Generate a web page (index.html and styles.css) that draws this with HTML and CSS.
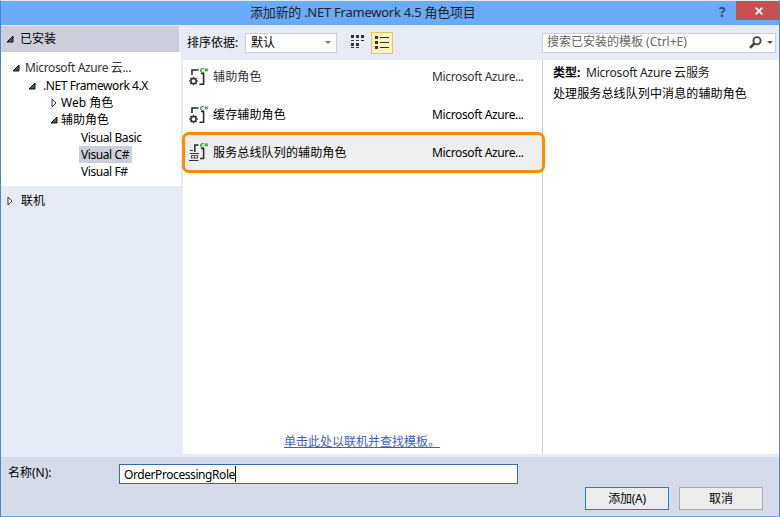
FILE: index.html
```html
<!DOCTYPE html>
<html lang="zh-CN">
<head>
<meta charset="utf-8">
<title>添加新的 .NET Framework 4.5 角色项目</title>
<link rel="stylesheet" href="styles.css">
</head>
<body>
<svg width="0" height="0" class="defs">
  <defs>
    <g id="bracket" fill="none" stroke="#2b2b2b" stroke-width="1.6">
      <path d="M3 7V2H9.5M12 5.5H14.6V16.2H10.5"/>
    </g>
    <g id="csharp" fill="none" stroke="#2e9a36">
      <path stroke-width="1.3" d="M14.8 .9C12.800 .2 11.700 1.300 11.700 2.500C11.700 3.800 12.900 4.800 14.800 4.100"/>
      <path stroke-width=".8" d="M16.500 .3V3.500M18 .3V3.500M15.600 1.200H18.900M15.600 2.600H18.900"/>
    </g>
    <symbol id="role" viewBox="0 0 20 19">
      <use href="#bracket"/><use href="#csharp"/>
      <circle cx="4.500" cy="13" r="2.600" fill="none" stroke="#333" stroke-width="1.500"/>
      <path d="M4.500 8.700V10.300M4.500 15.700V17.300M.2 13H1.800M7.200 13H8.800M1.500 10L2.600 11.100M6.400 14.900L7.500 16M1.500 16L2.600 14.900M6.400 11.100L7.500 10" stroke="#333" stroke-width="1.500"/>
    </symbol>
    <symbol id="bus" viewBox="0 0 20 19">
      <path d="M5.800 9V2H9.500M12 5.500H14.600V15.500H11" fill="none" stroke="#2b2b2b" stroke-width="1.500"/>
      <use href="#csharp"/>
      <path d="M1 7.500H4M1 10.500H10M0 17.500H9.500" stroke="#333" stroke-width="1.100"/>
      <path d="M2 12.500H9M2 15H9M2.500 12V15.500M5.500 12V15.500M8.500 12V15.500" stroke="#555" stroke-width="1"/>
    </symbol>
    <symbol id="open" viewBox="0 0 8 8"><path d="M7 1V7H1Z" fill="#555" stroke="#111"/></symbol>
    <symbol id="closed" viewBox="0 0 6 10"><path d="M1 1L5 5L1 9Z" fill="#fff" stroke="#333"/></symbol>
  </defs>
</svg>
<div class="window">
  <header class="titlebar">
    <h1><span class="t-title">添加新的 .NET Framework 4.5 角色项目</span></h1>
    <span class="help">?</span>
    <button class="close"><svg width="8" height="8" viewBox="0 0 8 8"><path d="M.7 .7L7.300 7.300M7.300 .7L.7 7.300" stroke="#fff" stroke-width="1.700"/></svg></button>
  </header>
  <div class="body">
    <aside class="sidebar">
      <div class="group"><svg class="open"><use href="#open"/></svg><span>已安装</span></div>
      <div class="tree">
        <div class="node n1"><svg class="open"><use href="#open"/></svg><span class="t-azure">Microsoft Azure 云...</span></div>
        <div class="node n2"><svg class="open"><use href="#open"/></svg><span class="t-net">.NET Framework 4.X</span></div>
        <div class="node n3"><svg class="closed"><use href="#closed"/></svg><span class="t-web">Web 角色</span></div>
        <div class="node n3"><svg class="open"><use href="#open"/></svg><span>辅助角色</span></div>
        <div class="node n4 first"><span class="t-vb">Visual Basic</span></div>
        <div class="node n4"><span class="selected">Visual C#</span></div>
        <div class="node n4"><span>Visual F#</span></div>
      </div>
      <div class="online"><svg class="closed"><use href="#closed"/></svg><span>联机</span></div>
    </aside>
    <div class="content">
      <div class="toolbar">
        <span class="sort-label">排序依据:</span>
        <div class="combo"><span>默认</span><svg width="6" height="4"><path d="M0 0H6L3 3Z" fill="#777"/></svg></div>
        <svg class="small-view" width="14" height="15" fill="#333"><path d="M1 0h3v3H1zM6 0h3v3H6zM11 0h3v3h-3zM1 5h3v1H1zM6 5h3v1H6zM11 5h3v1h-3zM1 8h3v3H1zM6 8h3v3H6zM1 12h3v1H1zM6 12h3v1H6z"/></svg>
        <div class="list-view"><svg width="14" height="13" fill="#333"><path d="M0 0h3v3H0zM0 5h3v3H0zM0 10h3v3H0zM5 1h9v1H5zM5 6h9v1H5zM5 11h9v1H5z"/></svg></div>
        <div class="search"><span class="t-search">搜索已安装的模板 (Ctrl+E)</span>
          <svg width="13" height="13" viewBox="0 0 13 13" fill="none" stroke="#444"><circle cx="8" cy="4.800" r="3.600" stroke-width="1.800"/><path d="M5.300 7.500L1 11.800" stroke-width="2.600"/></svg>
          <svg class="arrow" width="6" height="4"><path d="M0 0H6L3 3Z" fill="#555"/></svg>
        </div>
      </div>
      <div class="panes">
        <main class="list">
          <div class="item dim"><svg class="icon"><use href="#role"/></svg><span class="name">辅助角色</span><span class="vendor">Microsoft Azure...</span></div>
          <div class="item"><svg class="icon"><use href="#role"/></svg><span class="name">缓存辅助角色</span><span class="vendor">Microsoft Azure...</span></div>
          <div class="item active"><svg class="icon"><use href="#bus"/></svg><span class="name">服务总线队列的辅助角色</span><span class="vendor">Microsoft Azure...</span></div>
          <a class="link">单击此处以联机并查找模板。</a>
        </main>
        <section class="details">
          <div><b>类型:</b><span class="t-type">Microsoft Azure 云服务</span></div>
          <div class="desc">处理服务总线队列中消息的辅助角色</div>
        </section>
      </div>
    </div>
  </div>
  <footer class="footer">
    <div class="name-row"><label>名称(N):</label><div class="input"><span class="t-input">OrderProcessingRole</span><i class="caret"></i></div></div>
    <div class="buttons"><button class="btn primary">添加(A)</button><button class="btn">取消</button></div>
  </footer>
</div>
</body>
</html>
```
FILE: styles.css
```css
* { box-sizing: border-box; }
body { margin: 0; width: 780px; height: 517px; overflow: hidden; font: 12px/18px "Noto Sans", "Noto Sans CJK SC", sans-serif; color: #000; }
span, a, label { white-space: nowrap; }
svg { flex: none; }
button { font: inherit; padding: 0; border: 0; }
.defs { position: absolute; }
.window { width: 780px; height: 517px; display: flex; flex-direction: column; border: 1px solid #4d88ca; border-top-color: #e3eaf3; border-bottom-color: #6aabf7; }
.titlebar { height: 24px; flex: none; display: flex; background: #6aabf7; }
.titlebar h1 { margin: 0; padding-left: 249px; width: 715px; font-size: 13px; line-height: 23px; font-weight: 400; color: #222; }
.t-title { letter-spacing: -.25px; }
.help { width: 20px; font-size: 14px; font-weight: 700; line-height: 21px; color: #34506f; padding-left: 3px; }
.close { width: 43px; height: 19px; background: #c75050; display: flex; align-items: center; justify-content: center; padding: 1px 0 0 2px; }
.body { height: 432px; flex: none; display: flex; background: #e6ebf5; }
.sidebar { width: 182px; }
.group { width: 178px; height: 26px; margin-top: 1px; background: #cccedb; display: flex; align-items: center; padding-left: 5px; gap: 6px; }
.open { width: 8px; height: 8px; }
.closed { width: 6px; height: 10px; }
.tree { width: 180px; height: 134px; background: #fff; padding-top: 6px; }
.node { height: 17px; line-height: 17px; display: flex; align-items: center; }
.n1 { padding-left: 11px; gap: 5px; height: 19px; color: #333; }
.n2 { padding-left: 27px; gap: 7px; }
.n3 { padding-left: 49px; gap: 3px; }
.n3 .closed { margin-left: 1px; margin-right: 1px; }
.n4 { padding-left: 80px; letter-spacing: -.42px; }
.t-azure { letter-spacing: -.36px; }
.t-net { letter-spacing: -.42px; }
.n4.first { height: 18px; }
.selected { background: #cccedb; height: 17px; margin-left: -2px; width: 53px; padding-left: 2px; }
.online { display: flex; align-items: center; height: 30px; padding-left: 6px; gap: 8px; }
.content { flex: 1; }
.toolbar { height: 35px; display: flex; align-items: center; padding-left: 4px; }
.sort-label { width: 58px; }
.combo { width: 92px; height: 20px; border: 1px solid #cccedb; background: #fff; display: flex; align-items: center; justify-content: space-between; padding: 0 5px; }
.small-view { margin-left: 13px; }
.list-view { width: 22px; height: 22px; margin-left: 7px; border: 1px solid #e5c365; background: #fff3bf; display: flex; align-items: center; justify-content: center; }
.search { width: 234px; height: 20px; margin-left: 149px; border: 1px solid #cccedb; background: #fff; display: flex; align-items: center; padding-left: 4px; color: #666; }
.t-search { width: 202px; margin-top: -2px; }
.search .arrow { margin-left: 5px; }
.panes { height: 394px; display: flex; background: #fff; }
.list { width: 360px; border-right: 1px solid #cccedb; display: flex; flex-direction: column; align-items: stretch; }
.item { height: 38px; padding: 0 18px 4px 6px; display: flex; align-items: center; }
.icon { width: 20px; height: 19px; margin-right: 4px; }
.name { flex: 1; letter-spacing: .15px; }
.vendor { width: 92px; letter-spacing: -.36px; }
.dim { color: #333; }
.item.active { width: 363px; height: 41px; margin: -4px 0 0 -1px; padding: 0 18px 0 4px; border: 3px solid #ff8c00; border-radius: 7px; background: #eee; position: relative; }
.link { margin-top: auto; padding-left: 101px; padding-bottom: 3px; color: #3b5fcc; text-decoration: underline; }
.details { padding: 2px 0 0 10px; line-height: 21px; }
.details b { display: inline-block; width: 33px; }
.t-type { letter-spacing: -.22px; color: #222; }
.desc { letter-spacing: .12px; }
.footer { flex: 1; background: #d6dbe9; border-top: 3px solid #e6ebf5; margin-top: -3px; padding-top: 6px; }
.name-row { display: flex; align-items: flex-start; padding-left: 7px; }
.name-row label { width: 111px; margin-top: 1px; }
.input { width: 399px; height: 20px; margin-top: 1px; border: 1px solid #3b63c4; background: #fff; display: flex; align-items: center; padding: 2px 0 0 4px; color: #000; }
.t-input { letter-spacing: -.42px; }
.caret { width: 1px; height: 16px; margin-top: -2px; background: #000; }
.buttons { display: flex; gap: 10px; justify-content: flex-end; padding: 3px 16px 0 0; }
.btn { width: 84px; height: 23px; border: 1px solid #acacac; background: #ececec; color: #000; }
.primary { border-color: #1883cf; letter-spacing: -.3px; }
```
